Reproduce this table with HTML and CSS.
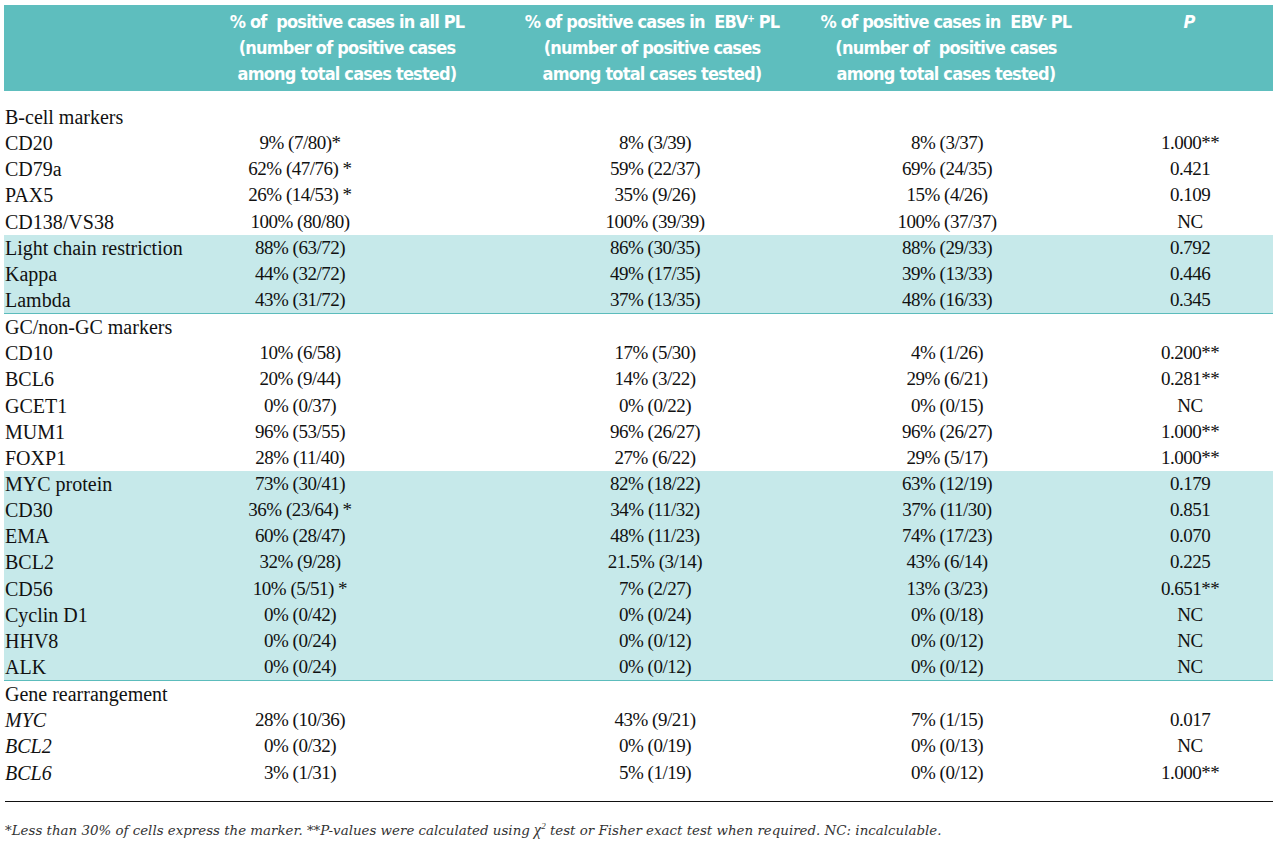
FILE: index.html
```html
<!DOCTYPE html>
<html lang="en">
<head>
<meta charset="utf-8">
<title>Immunophenotype of PL</title>
<link rel="stylesheet" href="styles.css">
</head>
<body>
<div class="page">
  <div class="thead grid">
    <div class="h c0"></div>
    <div class="h c1">% of&nbsp; positive cases in all PL<br>(number of positive cases<br>among total cases tested)</div>
    <div class="h c2">% of positive cases in&nbsp; EBV<sup>+</sup> PL<br>(number of positive cases<br>among total cases tested)</div>
    <div class="h c3">% of positive cases in&nbsp; EBV<sup>-</sup> PL<br>(number of&nbsp; positive cases<br>among total cases tested)</div>
    <div class="h c4">P</div>
  </div>

  <div class="tbody">
    <div class="row section"><div class="label">B-cell markers</div></div>
    <div class="row grid"><div class="label">CD20</div><div class="c1">9% (7/80)*</div><div class="c2">8% (3/39)</div><div class="c3">8% (3/37)</div><div class="c4">1.000**</div></div>
    <div class="row grid"><div class="label">CD79a</div><div class="c1">62% (47/76) *</div><div class="c2">59% (22/37)</div><div class="c3">69% (24/35)</div><div class="c4">0.421</div></div>
    <div class="row grid"><div class="label">PAX5</div><div class="c1">26% (14/53) *</div><div class="c2">35% (9/26)</div><div class="c3">15% (4/26)</div><div class="c4">0.109</div></div>
    <div class="row grid"><div class="label">CD138/VS38</div><div class="c1">100% (80/80)</div><div class="c2">100% (39/39)</div><div class="c3">100% (37/37)</div><div class="c4">NC</div></div>
    <div class="band">
      <div class="row grid"><div class="label">Light chain restriction</div><div class="c1">88% (63/72)</div><div class="c2">86% (30/35)</div><div class="c3">88% (29/33)</div><div class="c4">0.792</div></div>
      <div class="row grid"><div class="label">Kappa</div><div class="c1">44% (32/72)</div><div class="c2">49% (17/35)</div><div class="c3">39% (13/33)</div><div class="c4">0.446</div></div>
      <div class="row grid"><div class="label">Lambda</div><div class="c1">43% (31/72)</div><div class="c2">37% (13/35)</div><div class="c3">48% (16/33)</div><div class="c4">0.345</div></div>
    </div>
    <div class="row section"><div class="label">GC/non-GC markers</div></div>
    <div class="row grid"><div class="label">CD10</div><div class="c1">10% (6/58)</div><div class="c2">17% (5/30)</div><div class="c3">4% (1/26)</div><div class="c4">0.200**</div></div>
    <div class="row grid"><div class="label">BCL6</div><div class="c1">20% (9/44)</div><div class="c2">14% (3/22)</div><div class="c3">29% (6/21)</div><div class="c4">0.281**</div></div>
    <div class="row grid"><div class="label">GCET1</div><div class="c1">0% (0/37)</div><div class="c2">0% (0/22)</div><div class="c3">0% (0/15)</div><div class="c4">NC</div></div>
    <div class="row grid"><div class="label">MUM1</div><div class="c1">96% (53/55)</div><div class="c2">96% (26/27)</div><div class="c3">96% (26/27)</div><div class="c4">1.000**</div></div>
    <div class="row grid"><div class="label">FOXP1</div><div class="c1">28% (11/40)</div><div class="c2">27% (6/22)</div><div class="c3">29% (5/17)</div><div class="c4">1.000**</div></div>
    <div class="band">
      <div class="row grid"><div class="label">MYC protein</div><div class="c1">73% (30/41)</div><div class="c2">82% (18/22)</div><div class="c3">63% (12/19)</div><div class="c4">0.179</div></div>
      <div class="row grid"><div class="label">CD30</div><div class="c1">36% (23/64) *</div><div class="c2">34% (11/32)</div><div class="c3">37% (11/30)</div><div class="c4">0.851</div></div>
      <div class="row grid"><div class="label">EMA</div><div class="c1">60% (28/47)</div><div class="c2">48% (11/23)</div><div class="c3">74% (17/23)</div><div class="c4">0.070</div></div>
      <div class="row grid"><div class="label">BCL2</div><div class="c1">32% (9/28)</div><div class="c2">21.5% (3/14)</div><div class="c3">43% (6/14)</div><div class="c4">0.225</div></div>
      <div class="row grid"><div class="label">CD56</div><div class="c1">10% (5/51) *</div><div class="c2">7% (2/27)</div><div class="c3">13% (3/23)</div><div class="c4">0.651**</div></div>
      <div class="row grid"><div class="label">Cyclin D1</div><div class="c1">0% (0/42)</div><div class="c2">0% (0/24)</div><div class="c3">0% (0/18)</div><div class="c4">NC</div></div>
      <div class="row grid"><div class="label">HHV8</div><div class="c1">0% (0/24)</div><div class="c2">0% (0/12)</div><div class="c3">0% (0/12)</div><div class="c4">NC</div></div>
      <div class="row grid"><div class="label">ALK</div><div class="c1">0% (0/24)</div><div class="c2">0% (0/12)</div><div class="c3">0% (0/12)</div><div class="c4">NC</div></div>
    </div>
    <div class="row section"><div class="label">Gene rearrangement</div></div>
    <div class="row grid"><div class="label gene">MYC</div><div class="c1">28% (10/36)</div><div class="c2">43% (9/21)</div><div class="c3">7% (1/15)</div><div class="c4">0.017</div></div>
    <div class="row grid"><div class="label gene">BCL2</div><div class="c1">0% (0/32)</div><div class="c2">0% (0/19)</div><div class="c3">0% (0/13)</div><div class="c4">NC</div></div>
    <div class="row grid"><div class="label gene">BCL6</div><div class="c1">3% (1/31)</div><div class="c2">5% (1/19)</div><div class="c3">0% (0/12)</div><div class="c4">1.000**</div></div>
  </div>

  <div class="rule"></div>
  <p class="note">*Less than 30% of cells express the marker. **P-values were calculated using <span class="chi">χ<sup>2</sup></span> test or Fisher exact test when required. NC: incalculable.</p>
</div>
</body>
</html>
```

FILE: styles.css
```css
html, body {
  margin: 0;
  padding: 0;
  background: #ffffff;
}

.page {
  padding: 5px 7px 0 4px;
  color: #111111;
}

.grid {
  display: grid;
  grid-template-columns: 196px 294px 316px 272px 191px;
}

/* header band */
.thead {
  background: #5ebebe;
  color: #ffffff;
  font-family: "Liberation Sans Narrow", "DejaVu Sans Condensed", "Liberation Sans", sans-serif;
  font-weight: bold;
  font-size: 18px;
  letter-spacing: -0.8px;
  line-height: 26px;
  padding: 4px 0;
}

.thead .h {
  text-align: center;
  white-space: nowrap;
}

.thead sup {
  font-size: 10px;
  line-height: 0;
  vertical-align: 6px;
}

.thead .c4 {
  font-style: italic;
  padding-left: 23px;
}

/* body */
.tbody {
  margin-top: 13px;
  font-family: "Liberation Serif", "Times New Roman", serif;
  font-size: 20px;
}

.row {
  height: 26.15px;
  line-height: 26.15px;
  white-space: nowrap;
}

.row > div {
  text-align: center;
  font-size: 19px;
  letter-spacing: -0.5px;
}

.row > .label {
  text-align: left;
  padding-left: 1px;
  font-size: 20px;
  letter-spacing: 0;
}

.row .gene {
  font-style: italic;
}

.row .c1 { padding-right: 94px; }
.row .c2 { padding-left: 6px; }
.row .c3 { padding-left: 2px; }
.row .c4 { padding-left: 25px; }

.band {
  background: #c6e9ea;
  border-bottom: 1px solid #5cbcbc;
}

.rule {
  height: 1px;
  background: #111111;
  margin: 15px 0 0 1px;
}

.note {
  margin: 19px 0 0 1px;
  font-family: "DejaVu Serif", serif;
  font-style: italic;
  font-size: 13.4px;
  color: #333333;
}

.note sup {
  font-size: 9px;
  line-height: 0;
}

.chi {
  font-family: "Liberation Serif", serif;
  font-size: 16px;
}
```
